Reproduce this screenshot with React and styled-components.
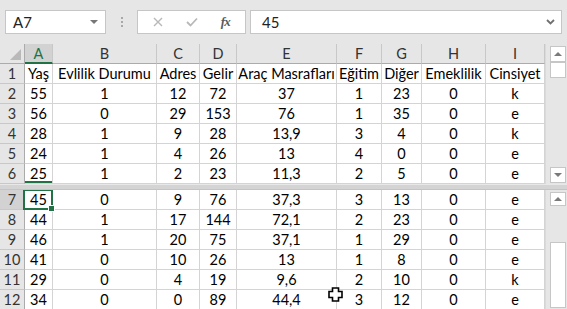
import React from "react";
import styled, { createGlobalStyle } from "styled-components";

const GlobalStyle = createGlobalStyle`
  html, body { margin: 0; padding: 0; background: #e6e6e6; }
  * { box-sizing: border-box; }
`;

const FONT = `Lato, "Liberation Sans", sans-serif`;
const GREEN = "#217346";
const COLS = [25, 28, 104, 43, 37, 100, 45, 40, 64, 59];
const LETTERS = ["A", "B", "C", "D", "E", "F", "G", "H", "I"];

const ROWS = [
  ["Yaş", "Evlilik Durumu", "Adres", "Gelir", "Araç Masrafları", "Eğitim", "Diğer", "Emeklilik", "Cinsiyet"],
  ["55", "1", "12", "72", "37", "1", "23", "0", "k"],
  ["56", "0", "29", "153", "76", "1", "35", "0", "e"],
  ["28", "1", "9", "28", "13,9", "3", "4", "0", "k"],
  ["24", "1", "4", "26", "13", "4", "0", "0", "e"],
  ["25", "1", "2", "23", "11,3", "2", "5", "0", "e"],
  ["45", "0", "9", "76", "37,3", "3", "13", "0", "e"],
  ["44", "1", "17", "144", "72,1", "2", "23", "0", "e"],
  ["46", "1", "20", "75", "37,1", "1", "29", "0", "e"],
  ["41", "0", "10", "26", "13", "1", "8", "0", "e"],
  ["29", "0", "4", "19", "9,6", "2", "10", "0", "k"],
  ["34", "0", "0", "89", "44,4", "3", "12", "0", "e"],
];

const Page = styled.div`
  position: relative;
  width: 567px;
  height: 309px;
  overflow: hidden;
  background: #e6e6e6;
  font-family: ${FONT};
  color: #000;
`;

const FormulaBar = styled.div`
  display: flex;
  align-items: center;
  height: 44px;
  padding: 10px 5px 10px 5px;
`;

const NameBox = styled.div`
  width: 101px;
  height: 24px;
  background: #fff;
  border: 1px solid #c6c6c6;
  display: flex;
  align-items: center;
  justify-content: space-between;
  padding: 0 7px 0 7px;
  font-size: 15px;
  color: #222;
`;

const SmallCaret = styled.span`
  width: 0;
  height: 0;
  border-left: 4px solid transparent;
  border-right: 4px solid transparent;
  border-top: 4px solid #777;
`;

const Dots = styled.div`
  width: 31px;
  display: flex;
  flex-direction: column;
  align-items: center;
  gap: 2px;
  & > span {
    width: 2px;
    height: 2px;
    background: #a8a8a8;
  }
`;

const FxGroup = styled.div`
  width: 109px;
  height: 24px;
  background: #fff;
  border: 1px solid #c6c6c6;
  display: flex;
  align-items: center;
  justify-content: space-around;
  padding: 0 4px;
`;

const FxText = styled.span`
  font-family: "Liberation Serif", serif;
  font-style: italic;
  font-weight: bold;
  font-size: 13px;
  color: #5a5a5a;
  letter-spacing: -1px;
`;

const FormulaInput = styled.div`
  flex: 1;
  margin-left: 4px;
  height: 24px;
  background: #fff;
  border: 1px solid #c6c6c6;
  display: flex;
  align-items: center;
  justify-content: space-between;
  padding: 0 6px 0 11px;
  font-size: 15px;
  color: #222;
`;

const Pane = styled.div`
  display: flex;
  height: ${(p) => p.$h}px;
  overflow: hidden;
`;

const Grid = styled.div`
  display: grid;
  grid-template-columns: ${COLS.map((c) => c + "px").join(" ")};
  grid-auto-rows: 20px;
  width: 545px;
  align-content: start;
  background: #fff;
`;

const Corner = styled.div`
  background: #e6e6e6;
  border-right: 1px solid #ababab;
  border-bottom: 1px solid #ababab;
  position: relative;
  &::after {
    content: "";
    position: absolute;
    right: 3px;
    bottom: 3px;
    width: 0;
    height: 0;
    border-left: 11px solid transparent;
    border-bottom: 11px solid #b9b9b9;
  }
`;

const ColHeader = styled.div`
  background: ${(p) => (p.$sel ? "#d2d2d2" : "#e6e6e6")};
  border-right: 1px solid #c8c8c8;
  border-bottom: ${(p) => (p.$sel ? `2px solid ${GREEN}` : "1px solid #ababab")};
  color: ${(p) => (p.$sel ? GREEN : "#333")};
  font-size: 14.5px;
  display: flex;
  align-items: center;
  justify-content: center;
  padding-top: ${(p) => (p.$sel ? 1 : 0)}px;
`;

const RowHeader = styled.div`
  background: ${(p) => (p.$sel ? "#d2d2d2" : "#e6e6e6")};
  border-right: 1px solid #ababab;
  border-bottom: 1px solid #c8c8c8;
  color: #333;
  font-size: 14.5px;
  display: flex;
  align-items: center;
  justify-content: center;
`;

const Cell = styled.div`
  position: relative;
  border-right: 1px solid #d4d4d4;
  border-bottom: 1px solid #d4d4d4;
  font-size: 14.5px;
  white-space: nowrap;
  display: flex;
  align-items: center;
  justify-content: center;
  box-shadow: ${(p) => (p.$edge ? `inset 0 -2px 0 ${GREEN}` : "none")};
  &::after {
    content: "";
    display: ${(p) => (p.$sel ? "block" : "none")};
    position: absolute;
    left: -2px;
    top: -1px;
    right: -1px;
    bottom: -1px;
    border: 2px solid ${GREEN};
  }
  &::before {
    content: "";
    display: ${(p) => (p.$sel ? "block" : "none")};
    position: absolute;
    right: -3px;
    bottom: -3px;
    width: 5px;
    height: 5px;
    background: ${GREEN};
    border: 1px solid #fff;
    z-index: 2;
  }
`;

const ScrollBar = styled.div`
  width: 22px;
  background: #e6e6e6;
  display: flex;
  flex-direction: column;
  align-items: flex-start;
  padding: 2px 0 1px 4px;
  border-left: 1px solid #dadada;
`;

const ScrollBtn = styled.div`
  width: 16px;
  height: 16px;
  background: #fff;
  border: 1px solid #c6c6c6;
  display: flex;
  align-items: center;
  justify-content: center;
  &::after {
    content: "";
    width: 0;
    height: 0;
    border-left: 4px solid transparent;
    border-right: 4px solid transparent;
    ${(p) =>
      p.$down ? "border-top: 4px solid #7a7a7a;" : "border-bottom: 4px solid #7a7a7a;"}
  }
`;

const Thumb = styled.div`
  width: 16px;
  height: ${(p) => p.$h}px;
  margin-top: ${(p) => p.$mt}px;
  background: #fff;
  border: 1px solid #c6c6c6;
`;

const Spacer = styled.div`
  flex: 1;
`;

const Splitter = styled.div`
  height: 6px;
  background: #d4d4d4;
  border-top: 1px solid #e8e8e8;
  border-bottom: 1px solid #c4c4c4;
`;

const Cursor = styled.svg`
  position: absolute;
  left: 328px;
  top: 287px;
`;

function DataRows({ from, to }) {
  const out = [];
  for (let r = from; r <= to; r++) {
    const rowSel = r === 7;
    out.push(
      <RowHeader key={"h" + r} $sel={rowSel}>
        {r}
      </RowHeader>
    );
    ROWS[r - 1].forEach((v, c) => {
      out.push(
        <Cell key={r + "-" + c} $sel={rowSel && c === 0} $edge={r === 6 && c === 0}>
          {v}
        </Cell>
      );
    });
  }
  return out;
}

export default function App() {
  return (
    <Page>
      <GlobalStyle />
      <FormulaBar>
        <NameBox>
          A7
          <SmallCaret />
        </NameBox>
        <Dots>
          <span />
          <span />
          <span />
        </Dots>
        <FxGroup>
          <svg width="10" height="10" viewBox="0 0 10 10">
            <path d="M1 1 L9 9 M9 1 L1 9" stroke="#b8b8b8" strokeWidth="1.4" fill="none" />
          </svg>
          <svg width="12" height="10" viewBox="0 0 12 10">
            <path d="M1 5 L4.5 8.5 L11 1.5" stroke="#b8b8b8" strokeWidth="1.8" fill="none" />
          </svg>
          <FxText>fx</FxText>
        </FxGroup>
        <FormulaInput>
          45
          <svg width="9" height="6" viewBox="0 0 9 6">
            <path d="M1 1 L4.5 4.5 L8 1" stroke="#707070" strokeWidth="1.8" fill="none" />
          </svg>
        </FormulaInput>
      </FormulaBar>

      <Pane $h={140}>
        <Grid>
          <Corner />
          {LETTERS.map((l) => (
            <ColHeader key={l} $sel={l === "A"}>
              {l}
            </ColHeader>
          ))}
          <DataRows from={1} to={6} />
        </Grid>
        <ScrollBar>
          <ScrollBtn />
          <Thumb $h={16} $mt={0} />
          <Spacer />
          <ScrollBtn $down />
        </ScrollBar>
      </Pane>
      <Splitter />
      <Pane $h={119}>
        <Grid>
          <DataRows from={7} to={12} />
        </Grid>
        <ScrollBar>
          <ScrollBtn />
          <Thumb $h={80} $mt={36} />
        </ScrollBar>
      </Pane>

      <Cursor width="15" height="15" viewBox="0 0 15 15">
        <path
          d="M4.5 1 H10.5 V4.5 H14 V10.5 H10.5 V14 H4.5 V10.5 H1 V4.5 H4.5 Z"
          fill="#fff"
          stroke="#000"
          strokeWidth="1.6"
        />
      </Cursor>
    </Page>
  );
}
